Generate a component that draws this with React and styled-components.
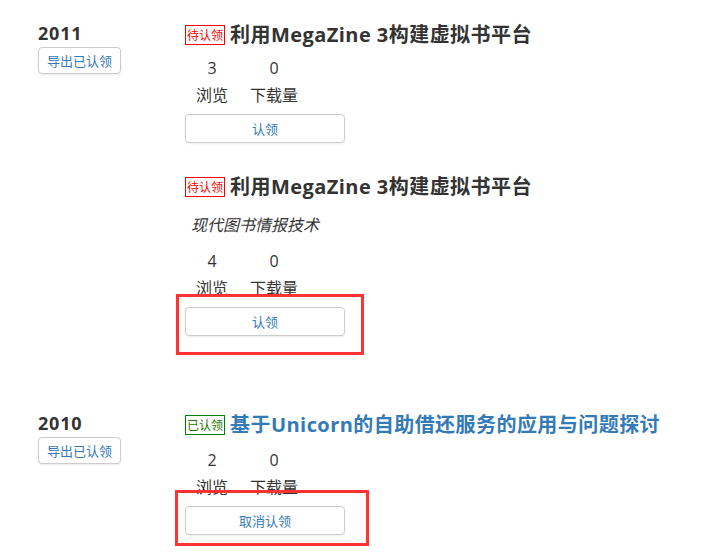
import React from 'react';
import styled, { createGlobalStyle } from 'styled-components';

const GlobalStyle = createGlobalStyle`
	body {
		margin: 0;
		background: #ffffff;
		color: #333333;
		font-family: "Open Sans", "Noto Sans CJK SC", sans-serif;
	}
`;

const Page = styled.div`
	min-height: 552px;
	box-sizing: border-box;
	padding: 22px 0 20px 38px;
`;

const Section = styled.div`
	display: flex;
	margin-bottom: ${({ gap }) => gap || 0}px;
`;

const YearCol = styled.div`
	width: 147px;
	flex-shrink: 0;
`;

const Year = styled.div`
	font-size: 18px;
	font-weight: 700;
	line-height: 22px;
	letter-spacing: 0.8px;
`;

const ExportButton = styled.button`
	margin-top: 3px;
	height: 27px;
	padding: 0 8px;
	font-family: "Noto Sans CJK SC", sans-serif;
	font-size: 13px;
	color: #337ab7;
	background: #fff;
	border: 1px solid #ccc;
	border-radius: 4px;
	box-shadow: 0 1px 2px rgba(0, 0, 0, 0.08);
`;

const ItemCol = styled.div`
	display: flex;
	flex-direction: column;
`;

const Item = styled.div`
	margin-bottom: ${({ gap }) => gap || 0}px;
`;

const TitleRow = styled.div`
	display: flex;
	align-items: center;
	height: 26px;
`;

const Badge = styled.span`
	display: inline-block;
	height: 20px;
	padding: 0 1px;
	box-sizing: border-box;
	border: 1px solid ${({ ok }) => (ok ? '#008000' : '#ff0000')};
	color: ${({ ok }) => (ok ? '#1d7a00' : '#ff0000')};
	font-family: "Noto Sans CJK SC", sans-serif;
	font-size: 12px;
	line-height: 18px;
	margin-right: 5px;
`;

const Title = styled.h3`
	margin: 0;
	font-size: 20px;
	font-weight: 700;
	line-height: 26px;
	letter-spacing: 0.45px;
	color: ${({ link }) => (link ? '#337ab7' : '#333')};
	white-space: nowrap;
`;

const Journal = styled.div`
	margin: 12px 0 0 6px;
	font-size: 16px;
	line-height: 26px;
	font-style: italic;
`;

const Stats = styled.div`
	display: flex;
	margin-top: ${({ top }) => top}px;
`;

const Stat = styled.div`
	display: flex;
	flex-direction: column;
	align-items: center;
	padding: 0 11px;
	font-size: 16px;
	line-height: 27px;
`;

const ButtonWrap = styled.div`
	position: relative;
	margin-top: 5px;
	width: 160px;
`;

const ClaimButton = styled.button`
	width: 160px;
	height: 29px;
	font-family: "Noto Sans CJK SC", sans-serif;
	font-size: 13px;
	color: #337ab7;
	background: #fff;
	border: 1px solid #ccc;
	border-radius: 4px;
	box-shadow: 0 1px 2px rgba(0, 0, 0, 0.08);
`;

const Highlight = styled.div`
	position: absolute;
	top: ${({ t }) => t}px;
	left: ${({ l }) => l}px;
	right: ${({ r }) => r}px;
	bottom: ${({ b }) => b}px;
	border: 3px solid #f33;
	pointer-events: none;
`;

const StatBlock = ({ views, downloads, top }) => (
	<Stats top={top}>
		<Stat>
			<span>{views}</span>
			<span>浏览</span>
		</Stat>
		<Stat>
			<span>{downloads}</span>
			<span>下载量</span>
		</Stat>
	</Stats>
);

export default function App() {
	return (
		<>
			<GlobalStyle />
			<Page>
				<Section gap={76}>
					<YearCol>
						<Year>2011</Year>
						<ExportButton>导出已认领</ExportButton>
					</YearCol>
					<ItemCol>
						<Item gap={31}>
							<TitleRow>
								<Badge>待认领</Badge>
								<Title>利用MegaZine 3构建虚拟书平台</Title>
							</TitleRow>
							<StatBlock views={3} downloads={0} top={7} />
							<ButtonWrap>
								<ClaimButton>认领</ClaimButton>
							</ButtonWrap>
						</Item>
						<Item>
							<TitleRow>
								<Badge>待认领</Badge>
								<Title>利用MegaZine 3构建虚拟书平台</Title>
							</TitleRow>
							<Journal>现代图书情报技术</Journal>
							<StatBlock views={4} downloads={0} top={10} />
							<ButtonWrap>
								<ClaimButton>认领</ClaimButton>
								<Highlight t={-13} l={-9} r={-19} b={-19} />
							</ButtonWrap>
						</Item>
					</ItemCol>
				</Section>
				<Section>
					<YearCol>
						<Year>2010</Year>
						<ExportButton>导出已认领</ExportButton>
					</YearCol>
					<ItemCol>
						<Item>
							<TitleRow>
								<Badge ok>已认领</Badge>
								<Title link>基于Unicorn的自助借还服务的应用与问题探讨</Title>
							</TitleRow>
							<StatBlock views={2} downloads={0} top={9} />
							<ButtonWrap>
								<ClaimButton>取消认领</ClaimButton>
								<Highlight t={-16} l={-10} r={-24} b={-11} />
							</ButtonWrap>
						</Item>
					</ItemCol>
				</Section>
			</Page>
		</>
	);
}
